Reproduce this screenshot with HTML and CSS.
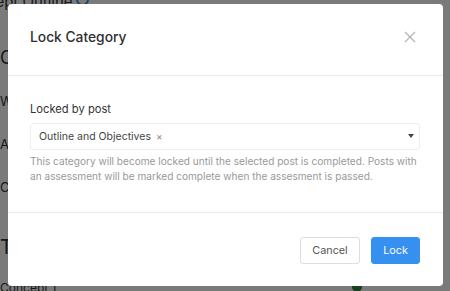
FILE: index.html
```html
<!DOCTYPE html>
<html lang="en">
<head>
    <meta charset="UTF-8">
    <title>Lock Category</title>
    <link rel="stylesheet" href="styles.css">
</head>
<body>
<div class="page">
    <div class="page_title">Concept Outline <span class="page_help"></span></div>
    <div class="page_list">
        <div class="page_row page_row_first">C</div>
        <div class="page_row">W</div>
        <div class="page_row">A</div>
        <div class="page_row">C</div>
        <div class="page_row page_row_big">T</div>
        <div class="page_row page_row_last">Concept 1 <span class="page_dot"></span></div>
    </div>
</div>
<div class="overlay"></div>
<div class="modal">
    <div class="modal_header">
        <h3 class="modal_title">Lock Category</h3>
        <span class="modal_close">
            <svg width="12" height="12" viewBox="0 0 12 12"><path d="M1 1L11 11M11 1L1 11" stroke="#b4b4b4" stroke-width="1.3" fill="none"/></svg>
        </span>
    </div>
    <div class="modal_body">
        <label class="field_label">Locked by post</label>
        <div class="select">
            <span class="select_tag">Outline and Objectives <i class="select_remove">&times;</i></span>
            <span class="select_caret"></span>
        </div>
        <p class="field_help">This category will become locked until the selected post is completed. Posts with an assessment will be marked complete when the assesment is passed.</p>
    </div>
    <div class="modal_footer">
        <button class="btn btn_default">Cancel</button>
        <button class="btn btn_primary">Lock</button>
    </div>
</div>
</body>
</html>
```

FILE: styles.css
```css
* {
    padding: 0;
    margin: 0;
    box-sizing: border-box;
}
html {
    overflow: hidden;
}
body {
    width: 450px;
    height: 291px;
    overflow: hidden;
    font-family: Inter, "Liberation Sans", sans-serif;
    color: #333;
    background: #fff;
    position: relative;
}
.page {
    height: 291px;
    overflow: hidden;
}
.page_title {
    font-size: 15px;
    margin-top: -10px;
    margin-left: -42px;
    white-space: nowrap;
    line-height: 24px;
}
.page_help {
    display: inline-block;
    width: 13px;
    height: 13px;
    border-radius: 50%;
    border: 2px solid #3d8ee0;
    margin-left: -1px;
    vertical-align: 1px;
}
.page_list {
    padding-top: 36px;
}
.page_row {
    font-size: 13px;
    height: 43px;
    line-height: 16px;
    white-space: nowrap;
}
.page_row_first {
    font-size: 18px;
}
.page_row_big {
    font-size: 20px;
    height: 42px;
    padding-top: 17px;
}
.page_row_last {
    margin-top: 16px;
    font-size: 12px;
}
.page_dot {
    display: inline-block;
    width: 10px;
    height: 10px;
    border-radius: 50%;
    background: #2f8a3c;
    margin-left: 292px;
}
.overlay {
    position: absolute;
    left: 0;
    top: 0;
    width: 100%;
    height: 100%;
    background: rgba(0, 0, 0, 0.52);
}
.modal {
    position: absolute;
    left: 8px;
    top: 4px;
    width: 435px;
    height: 282px;
    background: #fff;
    border-radius: 4px;
    display: flex;
    flex-direction: column;
}
.modal_header {
    height: 72px;
    border-bottom: 1px solid #e9e9e9;
    display: flex;
    align-items: center;
    justify-content: space-between;
    padding: 0 27px 6px 22px;
}
.modal_title {
    font-size: 13.8px;
    font-weight: 500;
    color: #2f2f2f;
}
.modal_close {
    display: flex;
}
.modal_body {
    padding: 26px 23px 0 22px;
    height: 137px;
    border-bottom: 1px solid #e9e9e9;
}
.field_label {
    display: block;
    font-size: 11.2px;
    color: #333;
    line-height: 14px;
    margin-bottom: 7px;
}
.select {
    height: 27px;
    border: 1px solid #eee;
    border-radius: 3px;
    display: flex;
    align-items: center;
    justify-content: space-between;
    padding: 0 5px 0 8px;
}
.select_tag {
    font-size: 10.5px;
    color: #444;
}
.select_remove {
    font-style: normal;
    color: #888;
    font-size: 10px;
    margin-left: 2px;
}
.select_caret {
    width: 0;
    height: 0;
    border-left: 3.5px solid transparent;
    border-right: 3.5px solid transparent;
    border-top: 4px solid #444;
    margin-top: -2px;
}
.field_help {
    margin-top: 4px;
    font-size: 10.1px;
    line-height: 15px;
    color: #999;
}
.modal_footer {
    flex: 1;
    display: flex;
    justify-content: flex-end;
    align-items: center;
    gap: 11px;
    padding: 2px 23px 0 0;
}
.btn {
    font-family: Inter, "Liberation Sans", sans-serif;
    font-size: 10.8px;
    height: 27px;
    border-radius: 3px;
    cursor: pointer;
}
.btn_default {
    width: 60px;
    background: #fff;
    border: 1px solid #ddd;
    color: #555;
}
.btn_primary {
    width: 49px;
    background: #3590ef;
    border: 1px solid #3590ef;
    color: #fff;
}
```
